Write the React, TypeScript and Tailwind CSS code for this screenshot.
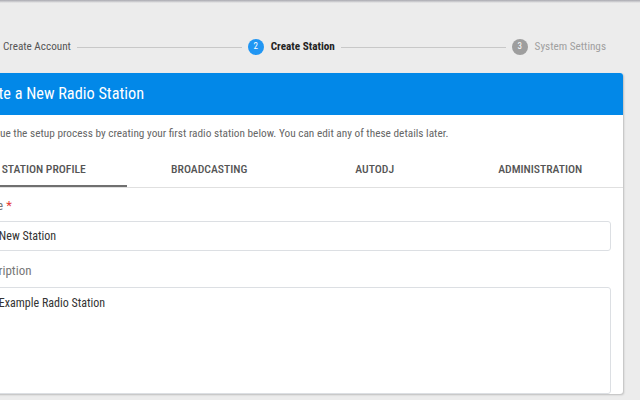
export default function App() {
  const tabs = ["Station Profile", "Broadcasting", "AutoDJ", "Administration"];
  return (
    <div className="relative h-[400px] w-[640px] overflow-hidden bg-[#ececec] font-['Roboto',sans-serif] font-stretch-[80%]">
      {/* shadow of navbar above */}
      <div className="h-[3px] bg-gradient-to-b from-[#a9a9b0] to-[#ececec]" />

      {/* Stepper */}
      <div className="ml-[-20px] mt-[36px] flex h-4 w-[626px] items-center">
        <div className="flex items-center gap-[7px]">
          <span className="flex h-4 w-4 items-center justify-center rounded-full bg-[#2196f3] text-[9px] text-white">1</span>
          <span className="text-[11.2px] text-[#555]">Create Account</span>
        </div>
        <div className="mx-[6px] h-px flex-1 bg-[#c8c8c8]" />
        <div className="flex items-center gap-[7px]">
          <span className="flex h-4 w-4 items-center justify-center rounded-full bg-[#2196f3] text-[9px] text-white">2</span>
          <span className="text-[11.2px] font-bold text-[#222]">Create Station</span>
        </div>
        <div className="mx-[6px] h-px flex-1 bg-[#c8c8c8]" />
        <div className="flex items-center gap-[7px]">
          <span className="flex h-4 w-4 items-center justify-center rounded-full bg-[#9e9e9e] text-[9px] text-white">3</span>
          <span className="text-[11.2px] text-[#a0a0a0]">System Settings</span>
        </div>
      </div>

      {/* Card */}
      <div className="ml-[-39px] mt-[18px] w-[662px] overflow-hidden rounded-[3px] bg-white shadow-[1px_1px_2px_rgba(0,0,0,0.2)]">
        <div className="flex h-[42px] items-center bg-[#0288e8] pl-[8px] text-[16.3px] text-white">
          Create a New Radio Station
        </div>
        <p className="pl-[10px] pt-[9px] text-[11.3px] leading-[20px] text-[#666]">
          Continue the setup process by creating your first radio station below. You can edit any of these details later.
        </p>
        <div className="mt-[9px] flex border-b border-[#e0e0e0]">
          {tabs.map((tab, i) => (
            <div
              key={tab}
              className={
                i === 0
                  ? "flex h-[34px] flex-1 items-center justify-center border-b-2 border-[#707070] pt-[2px] text-[11.7px] font-medium uppercase text-[#555]"
                  : "flex h-[34px] flex-1 items-center justify-center border-b-2 border-transparent pt-[2px] text-[11.7px] font-medium uppercase text-[#555]"
              }
            >
              {tab}
            </div>
          ))}
        </div>

        <div className="pl-[12px] pr-[12px]">
          <div className="mt-[8px] text-[13px] leading-[20px] text-[#777]">
            Name <span className="text-[#e53935]">*</span>
          </div>
          <div className="mt-[5px] flex h-[30px] items-center rounded-[3px] border border-[#dcdfe3] px-[8px] text-[12px] text-[#333]">
            My New Station
          </div>
          <div className="mt-[10px] text-[13px] leading-[20px] text-[#777]">Description</div>
          <div className="mt-[6px] h-[107px] rounded-[3px] border border-[#dcdfe3] px-[8px] pt-[6px] text-[12px] text-[#333]">
            My Example Radio Station
          </div>
        </div>
      </div>
    </div>
  );
}
